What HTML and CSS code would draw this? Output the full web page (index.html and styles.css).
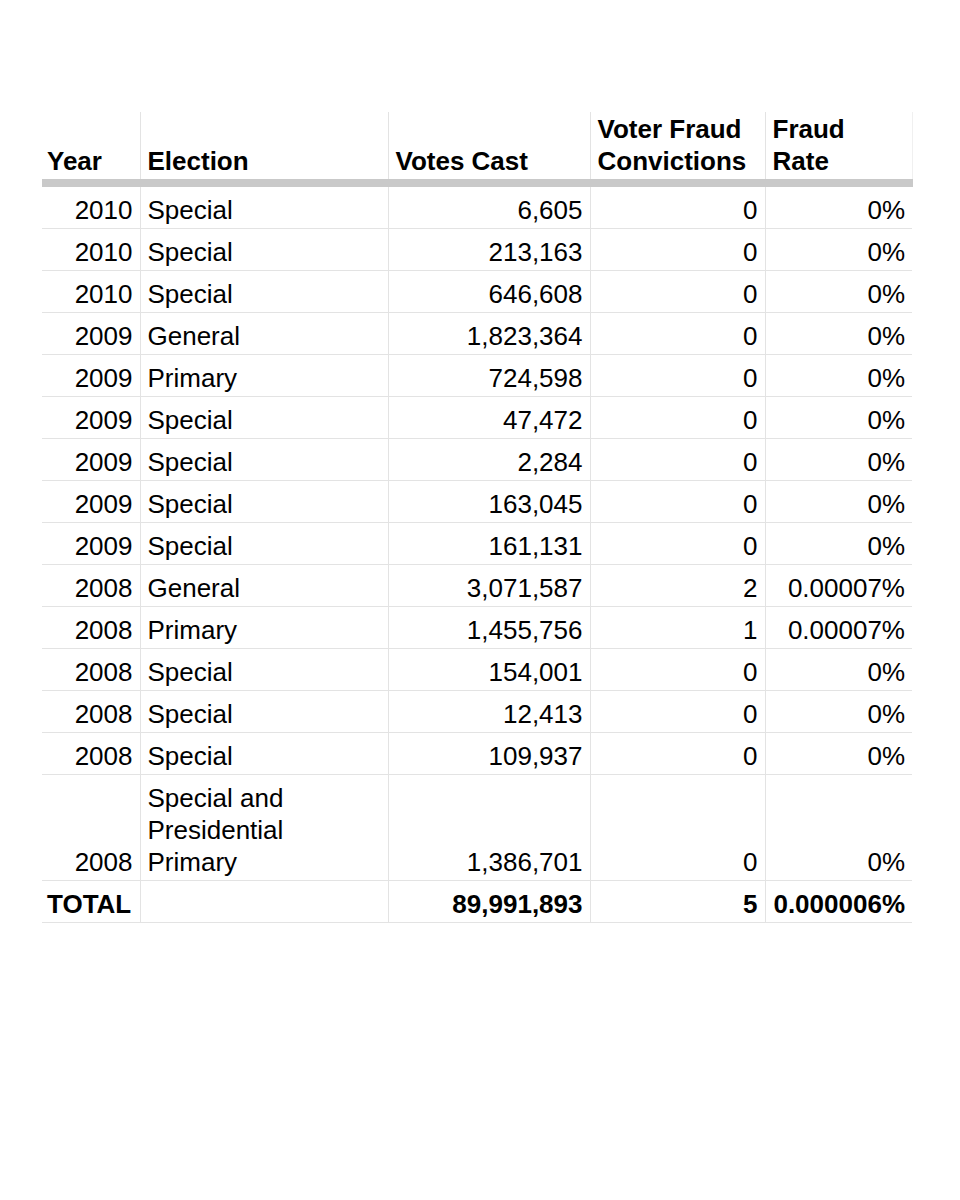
FILE: index.html
```html
<!DOCTYPE html>
<html>
<head>
<meta charset="utf-8">
<link rel="stylesheet" href="styles.css">
</head>
<body>
<div class="sheet">
<table class="grid">
<colgroup>
<col class="c-year"><col class="c-election"><col class="c-votes"><col class="c-conv"><col class="c-rate">
</colgroup>
<thead>
<tr>
<th class="l">Year</th>
<th class="l">Election</th>
<th class="l">Votes Cast</th>
<th class="l">Voter Fraud Convictions</th>
<th class="l">Fraud Rate</th>
</tr>
</thead>
<tbody>
<tr><td class="r">2010</td><td>Special</td><td class="r">6,605</td><td class="r">0</td><td class="r">0%</td></tr>
<tr><td class="r">2010</td><td>Special</td><td class="r">213,163</td><td class="r">0</td><td class="r">0%</td></tr>
<tr><td class="r">2010</td><td>Special</td><td class="r">646,608</td><td class="r">0</td><td class="r">0%</td></tr>
<tr><td class="r">2009</td><td>General</td><td class="r">1,823,364</td><td class="r">0</td><td class="r">0%</td></tr>
<tr><td class="r">2009</td><td>Primary</td><td class="r">724,598</td><td class="r">0</td><td class="r">0%</td></tr>
<tr><td class="r">2009</td><td>Special</td><td class="r">47,472</td><td class="r">0</td><td class="r">0%</td></tr>
<tr><td class="r">2009</td><td>Special</td><td class="r">2,284</td><td class="r">0</td><td class="r">0%</td></tr>
<tr><td class="r">2009</td><td>Special</td><td class="r">163,045</td><td class="r">0</td><td class="r">0%</td></tr>
<tr><td class="r">2009</td><td>Special</td><td class="r">161,131</td><td class="r">0</td><td class="r">0%</td></tr>
<tr><td class="r">2008</td><td>General</td><td class="r">3,071,587</td><td class="r">2</td><td class="r">0.00007%</td></tr>
<tr><td class="r">2008</td><td>Primary</td><td class="r">1,455,756</td><td class="r">1</td><td class="r">0.00007%</td></tr>
<tr><td class="r">2008</td><td>Special</td><td class="r">154,001</td><td class="r">0</td><td class="r">0%</td></tr>
<tr><td class="r">2008</td><td>Special</td><td class="r">12,413</td><td class="r">0</td><td class="r">0%</td></tr>
<tr><td class="r">2008</td><td>Special</td><td class="r">109,937</td><td class="r">0</td><td class="r">0%</td></tr>
<tr><td class="r">2008</td><td>Special and<br>Presidential<br>Primary</td><td class="r">1,386,701</td><td class="r">0</td><td class="r">0%</td></tr>
<tr class="total"><td class="l">TOTAL</td><td></td><td class="r">89,991,893</td><td class="r">5</td><td class="r">0.000006%</td></tr>
</tbody>
</table>
</div>
</body>
</html>
```

FILE: styles.css
```css
html, body {
  margin: 0;
  padding: 0;
  background: #ffffff;
}

.sheet {
  padding: 112px 0 0 42px;
}

.grid {
  border-collapse: collapse;
  table-layout: fixed;
  width: 870px;
  font-family: "Liberation Sans", Arial, sans-serif;
  font-size: 26px;
  line-height: 32px;
  color: #000;
}

.c-year { width: 98px; }
.c-election { width: 248px; }
.c-votes { width: 202px; }
.c-conv { width: 175px; }
.c-rate { width: 147px; }

.grid th,
.grid td {
  padding: 7px 7px 2px 7px;
  vertical-align: bottom;
  border-left: 1px solid #e3e3e3;
  border-bottom: 1px solid #e3e3e3;
  white-space: normal;
  overflow: hidden;
}

.grid th:first-child,
.grid td:first-child {
  border-left: none;
  padding-left: 5px;
}

.grid th {
  font-weight: bold;
  padding-top: 1px;
  border-bottom: 8px solid #c9c9c9;
}

.grid th:last-child {
  border-right: 1px solid #f0f0f0;
}

.l { text-align: left; }
.r { text-align: right; }

.total td {
  font-weight: bold;
}
```
